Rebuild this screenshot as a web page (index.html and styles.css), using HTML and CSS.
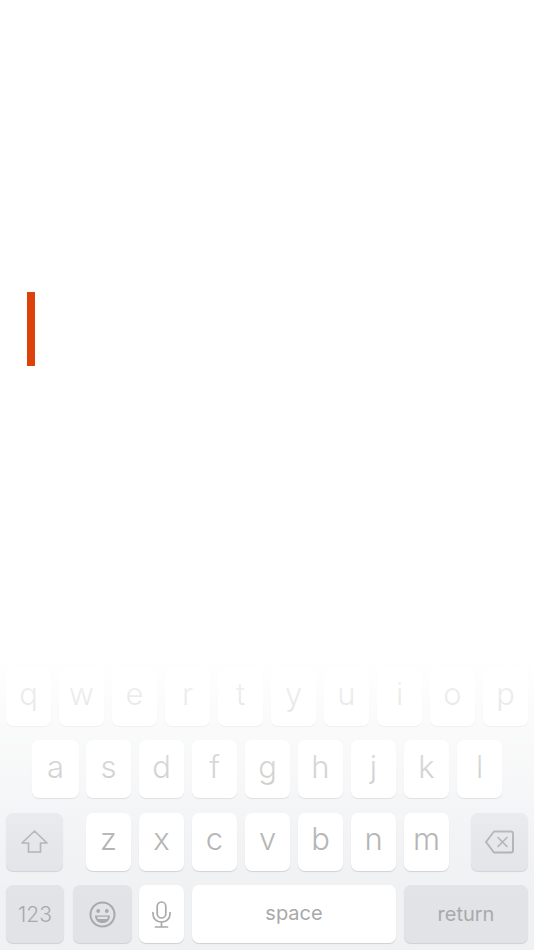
FILE: index.html
```html
<!DOCTYPE html>
<html lang="en">
<head>
    <meta charset="UTF-8">
    <meta name="viewport" content="width=device-width, initial-scale=1.0">
    <title>Compose</title>
    <link rel="stylesheet" href="styles.css">
</head>
<body>
    <div id="editor">
        <div class="caret"></div>
    </div>

    <div id="keyboard">
        <div class="row">
            <div class="key">q</div>
            <div class="key">w</div>
            <div class="key">e</div>
            <div class="key">r</div>
            <div class="key">t</div>
            <div class="key">y</div>
            <div class="key">u</div>
            <div class="key">i</div>
            <div class="key">o</div>
            <div class="key">p</div>
        </div>
        <div class="row row-home">
            <div class="key key-a">a</div>
            <div class="key">s</div>
            <div class="key">d</div>
            <div class="key">f</div>
            <div class="key">g</div>
            <div class="key">h</div>
            <div class="key">j</div>
            <div class="key">k</div>
            <div class="key">l</div>
        </div>
        <div class="row row-shift">
            <div class="key key-dark key-side">
                <svg width="27" height="23" viewBox="0 0 27 23">
                    <path class="icon" d="M13.5 1 L26 13 H19.5 V22 H7.5 V13 H1 Z"/>
                </svg>
            </div>
            <div class="key-spacer"></div>
            <div class="key">z</div>
            <div class="key">x</div>
            <div class="key">c</div>
            <div class="key">v</div>
            <div class="key">b</div>
            <div class="key">n</div>
            <div class="key">m</div>
            <div class="key-grow"></div>
            <div class="key key-dark key-side">
                <svg width="29" height="24" viewBox="0 0 29 24">
                    <path class="icon icon-bold" d="M9 1.5 H26 A2 2 0 0 1 28 3.5 V20.5 A2 2 0 0 1 26 22.5 H9 L1 12 Z"/>
                    <path class="icon" d="M13 7.5 L22 16.5 M22 7.5 L13 16.5"/>
                </svg>
            </div>
        </div>
        <div class="row row-bottom">
            <div class="key key-dark key-label key-123">123</div>
            <div class="key key-dark key-emoji">
                <svg width="27" height="27" viewBox="0 0 27 27">
                    <circle class="icon icon-bold" cx="13.5" cy="13.5" r="12"/>
                    <circle class="icon-fill" cx="9.2" cy="10" r="1.9"/>
                    <circle class="icon-fill" cx="17.8" cy="10" r="1.9"/>
                    <path class="icon-fill" d="M6 14.5 H21 C21 19.5 17.8 22 13.5 22 C9.2 22 6 19.5 6 14.5 Z"/>
                    <path class="icon-tooth" d="M8 15.8 H19 C18.8 16.8 18.5 17.4 18 18 H9 C8.5 17.4 8.2 16.8 8 15.8 Z"/>
                </svg>
            </div>
            <div class="key key-mic">
                <svg width="19" height="27" viewBox="0 0 19 27">
                    <rect class="icon" x="5.2" y="1" width="8.6" height="16" rx="4.3"/>
                    <path class="icon" d="M1 11.5 V13 C1 17.8 4.8 21 9.5 21 C14.2 21 18 17.8 18 13 V11.5 M9.5 21 V26 M3.5 26 H15.5"/>
                </svg>
            </div>
            <div class="key key-label key-space">space</div>
            <div class="key key-dark key-label key-return">return</div>
        </div>
    </div>

    <!-- white fade over the top of the keyboard -->
    <div id="fade"></div>
</body>
</html>
```

FILE: styles.css
```css
html, body {
    height: 100%;
}
body {
    margin: 0;
    display: flex;
    flex-direction: column;
    font-family: Inter, "Liberation Sans", sans-serif;
    background: linear-gradient(to bottom, #fff 0, #fff 642px, #f0f1f3 700px);
    overflow: hidden;
}
#editor {
    flex-grow: 1;
    padding: 292px 0 0 27px;
}
.caret {
    width: 8px;
    height: 74px;
    background-color: #dc4209;
}
#keyboard {
    display: flex;
    flex-direction: column;
    gap: 14.4px;
    padding: 0 6px 7px;
}
.row {
    display: flex;
    gap: 8px;
    height: 58px;
}
.row-home {
    padding: 0 26px;
}
.row-shift .key {
    flex: 0 0 45px;
}
.key {
    flex: 1 1 0;
    display: flex;
    align-items: center;
    justify-content: center;
    padding-bottom: 6px;
    box-sizing: border-box;
    background-color: #fff;
    border-radius: 7px;
    box-shadow: 0 1px 1px rgba(0, 0, 0, 0.14);
    color: #a9a9a9;
    font-size: 31px;
    font-weight: 300;
}
.key-a {
    flex: 0 0 47px;
    margin-right: -1px;
}
.key-dark {
    background-color: #e2e3e7;
    padding-bottom: 0;
}
.row-shift .key-side {
    flex: 0 0 57px;
}
.key-spacer {
    flex: 0 0 7px;
}
.key-grow {
    flex: 1 1 0;
}
.key-label {
    flex: none;
    font-size: 20px;
    font-weight: 400;
}
.key-123 {
    width: 58px;
    font-size: 21px;
    font-weight: 300;
}
.key-emoji {
    flex: none;
    width: 59px;
    margin-left: 1px;
    margin-right: -1px;
}
.key-mic {
    flex: none;
    width: 45px;
    padding-bottom: 0;
}
.key-space {
    width: 204px;
    padding-bottom: 3px;
}
.key-return {
    width: 124px;
}
.icon {
    fill: none;
    stroke: #a9a9a9;
    stroke-width: 1.7;
    stroke-linejoin: round;
    stroke-linecap: round;
}
.icon-bold {
    stroke-width: 2;
}
.icon-fill {
    fill: #a9a9a9;
}
.icon-tooth {
    fill: #e2e3e7;
}
#fade {
    position: absolute;
    left: 0;
    right: 0;
    top: 640px;
    bottom: 0;
    pointer-events: none;
    background: linear-gradient(to bottom,
        rgba(255, 255, 255, 1) 0,
        rgba(255, 255, 255, 0.9) 28px,
        rgba(255, 255, 255, 0.78) 55px,
        rgba(255, 255, 255, 0.52) 128px,
        rgba(255, 255, 255, 0.15) 202px,
        rgba(255, 255, 255, 0) 260px);
}
```
